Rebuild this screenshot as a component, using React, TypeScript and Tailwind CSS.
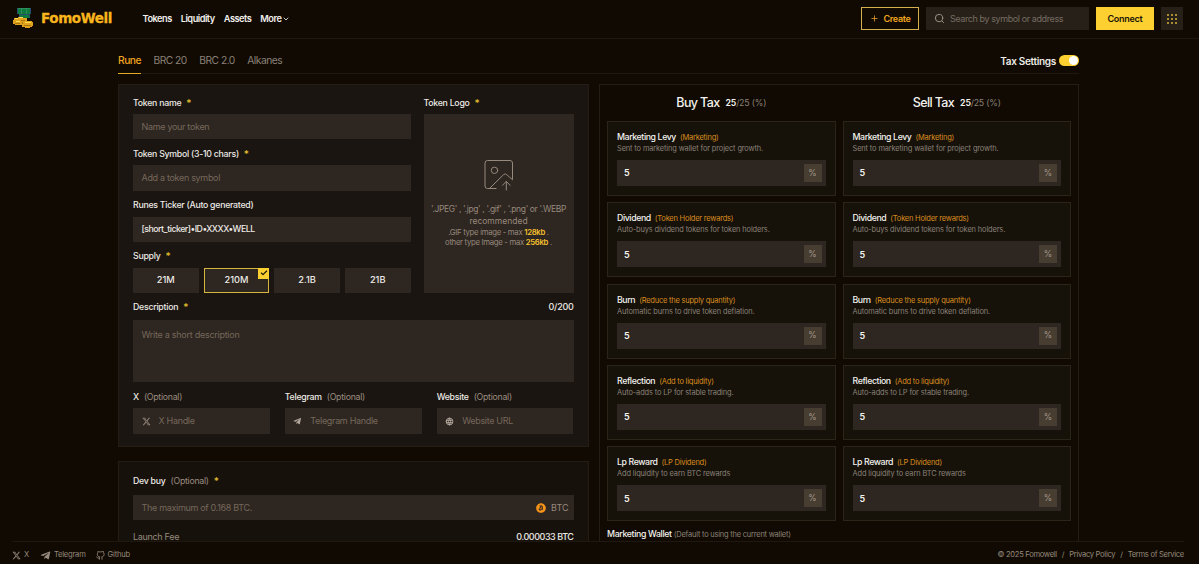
import { ReactNode } from "react";
import { FaTelegramPlane, FaBitcoin } from "react-icons/fa";
import { FaXTwitter } from "react-icons/fa6";
import { FiCheck, FiChevronDown, FiGithub, FiPlus, FiSearch } from "react-icons/fi";
import { TbWorld } from "react-icons/tb";

const navItems = ["Tokens", "Liquidity", "Assets"];
const supplies = ["21M", "210M", "2.1B", "21B"];

const taxes = [
  {
    name: "Marketing Levy",
    tag: "(Marketing)",
    hint: "Sent to marketing wallet for project growth.",
  },
  {
    name: "Dividend",
    tag: "(Token Holder rewards)",
    hint: "Auto-buys dividend tokens for token holders.",
  },
  {
    name: "Burn",
    tag: "(Reduce the supply quantity)",
    hint: "Automatic burns to drive token deflation.",
  },
  {
    name: "Reflection",
    tag: "(Add to liquidity)",
    hint: "Auto-adds to LP for stable trading.",
  },
  {
    name: "Lp Reward",
    tag: "(LP Dividend)",
    hint: "Add liquidity to earn BTC rewards",
  },
];

function Logo() {
  return (
    <svg width="21" height="21" viewBox="0 0 21 21" aria-hidden="true">
      <path d="M4 0h14v6h-1v4H6V6H4z" fill="#0f7a3e" />
      <path d="M4 0h14v1H4zM8 1h1v5H8zM13 1h1v5h-1z" fill="#2a8f5c" />
      <path d="M4 0h1v6H4zM17 0h1v6h-1zM6 6h11v1H6zM6 7h1v2H6zM16 7h1v2h-1z" fill="#2b4d6b" />
      <path
        d="M1 10h4V9h5v1h4v3h5v1h1v4h-1v1h-2v1h-5v-1H9v-2H2v-1H0v-4h1z"
        fill="#dfa21c"
      />
      <path d="M2 10h3v1H2zM6 9h4v1H6zM12 14h6v1h-6zM3 13h4v1H3z" fill="#ffdc55" />
      <path d="M2 15h5v1H2zM8 12h4v1H8zM11 17h7v1h-7zM9 14h1v2H9z" fill="#ab720e" />
    </svg>
  );
}

function AppsIcon() {
  return (
    <svg width="10" height="10" viewBox="0 0 10 10" fill="#f0ca42" aria-hidden="true">
      {[0, 4, 8].map((y) =>
        [0, 4, 8].map((x) => (
          <rect key={`${x}-${y}`} x={x + 0.2} y={y + 0.2} width="1.6" height="1.6" />
        )),
      )}
    </svg>
  );
}

function Header() {
  return (
    <header className="flex h-[39px] shrink-0 items-center border-b border-[#1f1810] pl-[13px] pr-[16px] pb-[1px]">
      <Logo />
      <span className="ml-[7px] w-[72px] whitespace-nowrap font-['DejaVu_Sans',sans-serif] text-[13.5px] font-bold leading-none tracking-[-0.4px] text-[#f8b51c] [-webkit-text-stroke:0.3px_#f8b51c]">
        FomoWell
      </span>
      <nav className="ml-[29.5px] flex items-center gap-[9px] text-[9.25px] font-semibold tracking-[-0.055em] text-[#f0eeea]">
        {navItems.map((item) => (
          <a key={item}>{item}</a>
        ))}
        <a className="flex items-center gap-[1px]">
          More <FiChevronDown size={8} strokeWidth={2.5} />
        </a>
      </nav>
      <div className="ml-auto flex items-center">
        <button className="flex h-[23px] w-[58px] items-center justify-center gap-[5px] border border-[#d3b04b] text-[9px] font-semibold tracking-[-0.04em] text-[#f2a51f]">
          <FiPlus size={9} />
          Create
        </button>
        <div className="ml-[7px] flex h-[23px] w-[163px] items-center gap-[5px] bg-[#272018] px-[8px] text-[9px] tracking-[-0.045em] text-[#756c62]">
          <FiSearch size={11} className="text-[#a39b90]" />
          Search by symbol or address
        </div>
        <button className="ml-[7px] h-[23px] w-[58px] bg-[#fdd031] text-[9px] font-semibold tracking-[-0.03em] text-[#1b1408]">
          Connect
        </button>
        <button
          aria-label="Apps"
          className="ml-[7px] flex h-[23px] w-[22px] items-center justify-center bg-[#272018]"
        >
          <AppsIcon />
        </button>
      </div>
    </header>
  );
}

function Label({
  children,
  optional,
  required,
}: {
  children: ReactNode;
  optional?: boolean;
  required?: boolean;
}) {
  return (
    <div className="mb-[5.5px] flex h-[12px] items-center whitespace-nowrap text-[8.75px] font-medium leading-[12px] tracking-[-0.03em] text-[#edeae6]">
      {children}
      {optional && <span className="ml-[5px] font-normal text-[#9a8c80]">(Optional)</span>}
      {required && <span className="ml-[5px] text-[10px] text-[#e5c02f]">*</span>}
    </div>
  );
}

function Field({ children, filled }: { children: ReactNode; filled?: boolean }) {
  return (
    <div
      className={`flex h-[25.4px] items-center bg-[#2e2620] pl-[8.5px] pr-[8px] ${
        filled
          ? "text-[8.75px] font-medium tracking-[-0.055em] text-[#edeae6]"
          : "text-[9px] tracking-[-0.035em] text-[#75685c]"
      }`}
    >
      {children}
    </div>
  );
}

function UploadIcon() {
  return (
    <svg
      width="30"
      height="31"
      viewBox="0 0 30 31"
      fill="none"
      stroke="#96897d"
      strokeWidth="1"
      strokeLinecap="round"
      strokeLinejoin="round"
      aria-hidden="true"
    >
      <path d="M12 28.5H3.5A2.5 2.5 0 0 1 1 26V3A2.5 2.5 0 0 1 3.5.5H26A2.5 2.5 0 0 1 28.5 3v16" />
      <circle cx="10.5" cy="10.3" r="3.2" />
      <path d="M5.5 28.5 19.5 14.700q1.700-1.600 3.300 0l5.700 5" />
      <path d="M22.300 30v-8.500M18.500 25.300l3.800-3.900 3.800 3.900" />
    </svg>
  );
}

function TokenForm() {
  return (
    <section className="h-[362.5px] border border-[#241d15] bg-[#1a1510] pl-[14px] pr-[14.5px] pt-[11.5px]">
      <div className="flex justify-between">
        <div className="flex w-[277.5px] flex-col gap-[8.4px]">
          <div>
            <Label required>Token name</Label>
            <Field>Name your token</Field>
          </div>
          <div>
            <Label required>Token Symbol (3-10 chars)</Label>
            <Field>Add a token symbol</Field>
          </div>
          <div>
            <Label>Runes Ticker (Auto generated)</Label>
            <Field filled>[short_ticker]•ID•XXXX•WELL</Field>
          </div>
          <div>
            <Label required>Supply</Label>
            <div className="grid grid-cols-4 gap-[5px]">
              {supplies.map((supply) => {
                const active = supply === "210M";
                return (
                  <button
                    key={supply}
                    className={`relative h-[25px] bg-[#2e2620] text-[9.25px] font-medium text-[#edeae6] ${
                      active ? "border border-[#d8b53c]" : ""
                    }`}
                  >
                    {supply}
                    {active && (
                      <span className="absolute -right-px -top-px flex size-[11px] items-center justify-center bg-[#fdd031] text-[#1b1408]">
                        <FiCheck size={8} strokeWidth={3.5} />
                      </span>
                    )}
                  </button>
                );
              })}
            </div>
          </div>
        </div>
        <div className="w-[150px]">
          <Label required>Token Logo</Label>
          <div className="flex h-[178.5px] flex-col items-center bg-[#2e2620] pt-[45.5px] text-center text-[#96897d]">
            <UploadIcon />
            <p className="mt-[12px] whitespace-nowrap text-[8.5px] leading-[12.5px] tracking-[-0.36px]">
              '.JPEG' , '.jpg' , '.gif' , '.png' or '.WEBP
              <br />
              <span className="tracking-normal">recommended</span>
            </p>
            <p className="-mt-[1px] whitespace-nowrap text-[7.75px] leading-[10px] tracking-[-0.04em]">
              .GIF type image - max <b className="font-semibold text-[#f5c02f]">128kb</b> .
              <br />
              other type Image - max <b className="font-semibold text-[#f5c02f]">256kb</b> .
            </p>
          </div>
        </div>
      </div>

      <div className="mt-[8px] flex justify-between">
        <Label required>Description</Label>
        <span className="text-[9px] font-medium leading-[12px] tracking-[-0.03em] text-[#edeae6]">
          0/200
        </span>
      </div>
      <div className="mt-[1.5px] h-[62.5px] bg-[#2e2620] px-[8.5px] pt-[8px] text-[9px] leading-[13px] tracking-[-0.03em] text-[#75685c]">
        Write a short description
      </div>

      <div className="mt-[8.5px] grid grid-cols-3 gap-[15px]">
        <div>
          <Label optional>X</Label>
          <Field>
            <FaXTwitter size={9} className="mr-[8px] text-[#96897d]" />X Handle
          </Field>
        </div>
        <div>
          <Label optional>Telegram</Label>
          <Field>
            <FaTelegramPlane size={8.5} className="mr-[8.500px] text-[#b3a89d]" />
            Telegram Handle
          </Field>
        </div>
        <div>
          <Label optional>Website</Label>
          <Field>
            <TbWorld size={9} strokeWidth={2.500} className="mr-[8px] text-[#b3a89d]" />
            Website URL
          </Field>
        </div>
      </div>
    </section>
  );
}

function DevBuy() {
  return (
    <section className="mt-[14.5px] h-[140px] border border-[#241d15] bg-[#17110c] pl-[14px] pr-[14.5px] pt-[13px]">
      <div className="mb-[8px]">
        <Label optional required>
          Dev buy
        </Label>
      </div>
      <Field>
        The maximum of 0.168 BTC.
        <FaBitcoin size={10} className="ml-auto mr-[5px] text-[#f7931a]" />
        <span className="-mr-[3px] tracking-normal text-[#96897d]">BTC</span>
      </Field>
      <div className="mt-[11px] flex justify-between text-[9px] leading-[12px] tracking-[-0.035em] text-[#96897d]">
        Launch Fee
        <span className="font-medium tracking-[-0.05em] text-[#edeae6]">0.000033 BTC</span>
      </div>
    </section>
  );
}

function TaxColumn({ title }: { title: string }) {
  return (
    <div className="flex flex-1 flex-col gap-[6.4px]">
      <h2 className="flex h-[29.5px] items-center justify-center gap-[6px] pt-[8px] text-[12.5px] font-medium tracking-[-0.05em] text-[#f4f2ef]">
        {title}
        <span className="text-[8.75px] font-normal tracking-[-0.02em] text-[#8b8178]">
          <b className="font-semibold text-[#f4f2ef]">25</b>/25 (%)
        </span>
      </h2>
      {taxes.map((tax) => (
        <div
          key={tax.name}
          className="h-[75px] border border-[#2b2519] bg-[#16120a] px-[9px] pt-[10px]"
        >
          <div className="flex h-[11px] items-center gap-[4px] whitespace-nowrap text-[8.75px] font-medium tracking-[-0.045em] text-[#f4f2ef]">
            {tax.name}
            <span className="text-[7.5px] font-normal tracking-[-0.03em] text-[#d98c1e]">
              {tax.tag}
            </span>
          </div>
          <p className="whitespace-nowrap text-[7.4px] leading-[11px] tracking-[-0.015em] text-[#8b8178]">
            {tax.hint}
          </p>
          <div className="mt-[6px] flex h-[26px] items-center justify-between bg-[#2e2620] pl-[7px] pr-[4px] text-[9px] font-semibold text-[#f4f2ef]">
            5
            <span className="flex size-[18px] items-center justify-center bg-[#483d31] text-[8.5px] font-normal text-[#a3988c]">
              %
            </span>
          </div>
        </div>
      ))}
    </div>
  );
}

function Footer() {
  return (
    <footer className="ml-[12px] mr-[15px] flex h-[23px] shrink-0 items-center border-t border-[#1f1810] pt-[4px] text-[7.6px] tracking-[-0.03em] text-[#96897d]">
      <FaXTwitter size={9} />
      <span className="ml-[3px]">X</span>
      <FaTelegramPlane size={11} className="ml-[11px]" />
      <span className="ml-[3px]">Telegram</span>
      <FiGithub size={9} strokeWidth={2.4} className="ml-[10px]" />
      <span className="ml-[3px]">Github</span>
      <div className="ml-auto flex gap-[5px] tracking-[-0.04em]">
        <span>© 2025 Fomowell</span>
        <span>/</span>
        <span>Privacy Policy</span>
        <span>/</span>
        <span>Terms of Service</span>
      </div>
    </footer>
  );
}

export default function App() {
  return (
    <div className="flex h-[564px] w-[1199px] flex-col overflow-hidden bg-[#100a02] font-['Inter','Liberation_Sans',sans-serif]">
      <Header />
      <main className="min-h-0 flex-1 overflow-hidden pl-[118px] pr-[120px]">
        <div className="flex h-[34.5px] items-end justify-between border-b border-[#1f1810]">
          <div className="-mb-px flex gap-[12.5px] text-[10.25px] leading-[15px] tracking-[-0.05em] text-[#8b8178]">
            <span className="h-[20.5px] border-b-[1.5px] border-[#e5ac22] font-medium text-[#f2a51f]">
              Rune
            </span>
            <span>BRC 20</span>
            <span>BRC 2.0</span>
            <span>Alkanes</span>
          </div>
          <div className="mb-[6px] flex items-center gap-[3px] text-[10px] font-semibold leading-[12px] tracking-[-0.03em] text-[#edeae6]">
            Tax Settings
            <span className="flex h-[11px] w-[20px] items-center justify-end rounded-full bg-[#fdd031] px-px">
              <span className="size-[9px] rounded-full bg-white" />
            </span>
          </div>
        </div>
        <div className="mt-[10.5px] flex gap-[10px]">
          <div className="w-[471px]">
            <TokenForm />
            <DevBuy />
          </div>
          <section className="h-[480px] flex-1 border border-[#241d15] px-[7px]">
            <div className="flex gap-[7px]">
              <TaxColumn title="Buy Tax" />
              <TaxColumn title="Sell Tax" />
            </div>
            <p className="mt-[7px] text-[8.75px] font-medium leading-[12px] tracking-[-0.04em] text-[#f4f2ef]">
              Marketing Wallet{" "}
              <span className="text-[7.5px] font-normal tracking-[-0.03em] text-[#8b8178]">
                (Default to using the current wallet)
              </span>
            </p>
          </section>
        </div>
      </main>
      <Footer />
    </div>
  );
}
